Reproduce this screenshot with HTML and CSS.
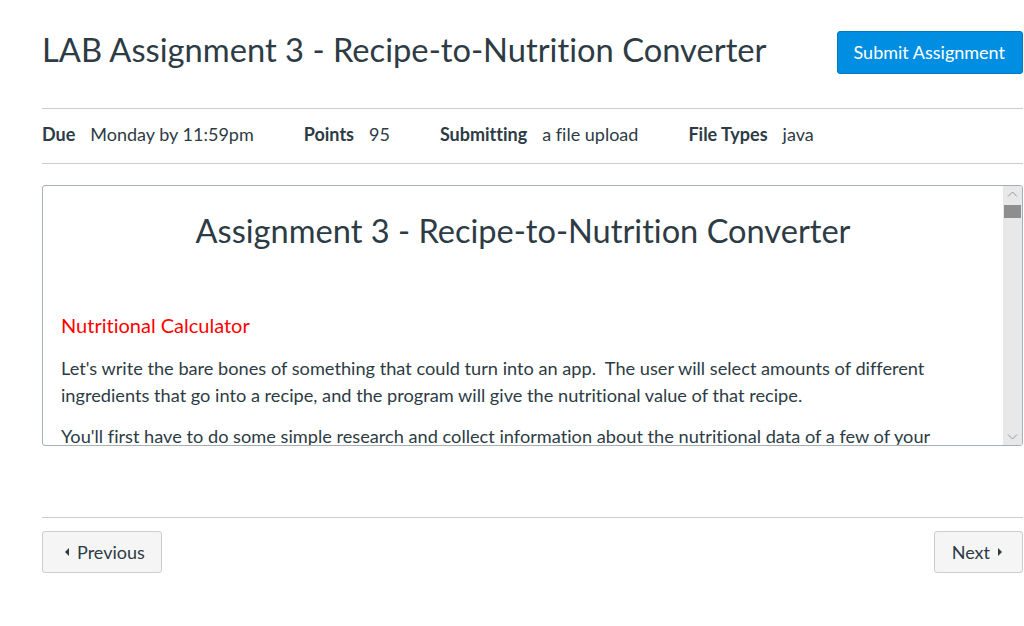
FILE: index.html
```html
<!DOCTYPE html>
<html>
<head>
<meta charset="utf-8">
<link rel="stylesheet" href="styles.css">
</head>
<body>
<div class="page">
  <div class="header">
    <h1 class="title">LAB Assignment 3 - Recipe-to-Nutrition Converter</h1>
    <button class="btn-primary">Submit Assignment</button>
  </div>
  <div class="details">
    <div class="detail"><span class="label">Due</span><span class="value">Monday by 11:59pm</span></div>
    <div class="detail"><span class="label">Points</span><span class="value">95</span></div>
    <div class="detail"><span class="label">Submitting</span><span class="value">a file upload</span></div>
    <div class="detail"><span class="label">File Types</span><span class="value">java</span></div>
  </div>
  <div class="frame">
    <div class="frame-content">
      <h2 class="doc-title">Assignment 3 - Recipe-to-Nutrition Converter</h2>
      <h3 class="doc-sub">Nutritional Calculator</h3>
      <p class="doc-p">Let's write the bare bones of something that could turn into an app.&nbsp; The user will select amounts of different ingredients that go into a recipe, and the program will give the nutritional value of that recipe.</p>
      <p class="doc-p">You'll first have to do some simple research and collect information about the nutritional data of a few of your favorite ingredients.</p>
    </div>
    <div class="scrollbar">
      <svg class="sb-arrow" width="19" height="17" viewBox="0 0 19 17"><path d="M5 10.5 L9.5 6 L14 10.5" fill="none" stroke="#9a9a9a" stroke-width="1"/></svg>
      <div class="sb-thumb"></div>
      <div class="sb-track"></div>
      <svg class="sb-arrow" width="19" height="17" viewBox="0 0 19 17"><path d="M5 6.5 L9.5 11 L14 6.5" fill="none" stroke="#9a9a9a" stroke-width="1"/></svg>
    </div>
  </div>
  <div class="nav">
    <button class="btn btn-prev"><span class="tri-left"></span>Previous</button>
    <button class="btn btn-next">Next<span class="tri-right"></span></button>
  </div>
</div>
</body>
</html>
```
FILE: styles.css
```css
* { box-sizing: border-box; }
html, body { margin: 0; padding: 0; background: #fff; }
body { font-family: Lato, "Open Sans", "Liberation Sans", sans-serif; color: #2D3B45; font-variant-ligatures: none; }
.page { padding: 31px 1px 0 42px; }
.header { display: flex; align-items: center; justify-content: space-between; height: 42px; }
.title { margin: -5px 0 0; font-size: 32.7px; font-weight: 400; line-height: 42px; color: #2D3B45; }
.btn-primary { font-family: inherit; font-size: 18px; background: #008EE2; color: #fff; border: 1px solid #0079C1; border-radius: 3px; height: 43px; padding: 0 17px 0 16px; margin-right: 0; }
.details { margin-top: 35px; border-top: 1px solid #C7CDD1; border-bottom: 1px solid #C7CDD1; display: flex; align-items: center; height: 56px; padding-bottom: 5px; font-size: 18px; }
.detail { display: flex; margin-right: 50px; }
.label { font-weight: 700; margin-right: 15px; }
.frame { margin-top: 21px; height: 261px; border: 1px solid #A5AFB5; border-radius: 3px; display: flex; overflow: hidden; }
.frame-content { flex: 1; overflow: hidden; padding: 0 18px; }
.doc-title { margin: 25px 0 0; font-size: 32.6px; font-weight: 400; text-align: center; line-height: 40px; color: #2D3B45; }
.doc-sub { margin: 60px 0 0; font-size: 20px; font-weight: 400; color: #FF0000; line-height: 28px; }
.doc-p { margin: 16px 0 0; font-size: 18.2px; line-height: 27px; }
.doc-p + .doc-p { margin-top: 14px; }
.scrollbar { width: 19px; background: #E8E8E8; display: flex; flex-direction: column; }
.sb-arrow { display: block; flex: none; }
.sb-thumb { height: 13px; background: #8E8E8E; margin: 2px 1px 0 1px; flex: none; }
.sb-track { flex: 1; }
.nav { margin-top: 71px; border-top: 1px solid #C7CDD1; padding-top: 13px; display: flex; justify-content: space-between; }
.btn { font-family: inherit; font-size: 18px; color: #2D3B45; background: #F5F5F5; border: 1px solid #C7CDD1; border-radius: 3px; height: 42px; display: flex; align-items: center; }
.btn-prev { padding: 0 16px 0 22px; }
.btn-next { padding: 0 20px 0 17px; }
.tri-left { width: 0; height: 0; border-top: 4px solid transparent; border-bottom: 4px solid transparent; border-right: 4px solid #2D3B45; margin: 0 8px 0 0; }
.tri-right { width: 0; height: 0; border-top: 4px solid transparent; border-bottom: 4px solid transparent; border-left: 4px solid #2D3B45; margin: 0 0 0 8px; }
```
